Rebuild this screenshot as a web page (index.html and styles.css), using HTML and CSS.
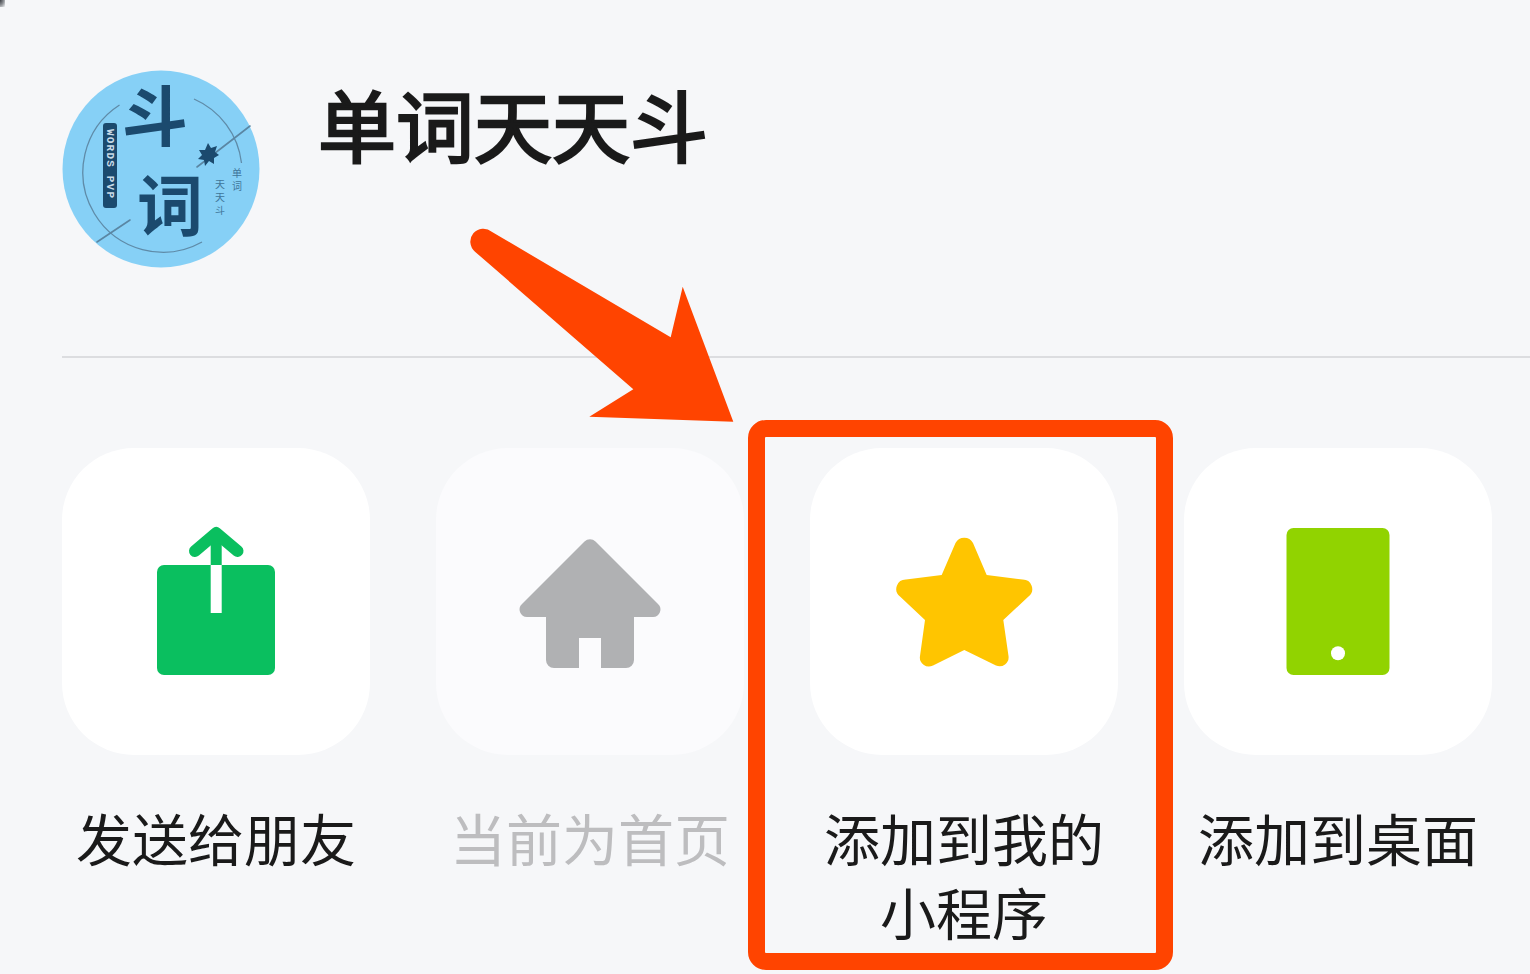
FILE: index.html
```html
<!DOCTYPE html>
<html lang="zh-CN">
<head>
<meta charset="utf-8">
<title>单词天天斗</title>
<link rel="stylesheet" href="styles.css">
</head>
<body>
<main class="sheet">
  <header class="head">
    <svg class="logo" viewBox="0 0 198 198" aria-label="logo">
      <circle cx="99" cy="99" r="98.5" fill="#86d0f6"/>
      <g fill="none" stroke="#5f8ba8" stroke-width="1.3">
        <path d="M57.5 35 A80 80 0 0 0 140 172"/>
        <path d="M132 29 A80 80 0 0 1 179.5 93"/>
      </g>
      <g stroke="#5a86a3" stroke-width="1.6" stroke-linecap="round">
        <path d="M35 172 L68 150"/>
        <path d="M135 97 L188 56"/>
      </g>
      <text class="logo-big" x="93" y="71" text-anchor="middle">斗</text>
      <text class="logo-big" x="108" y="160" text-anchor="middle">词</text>
      <rect x="41" y="53" width="14" height="85" rx="3" fill="#1b4a6e"/>
      <text class="logo-pill" x="48" y="59">WORDS PVP</text>
      <path d="M146 73 L149 78 L155 76 L153 82 L157 85 L152 88 L152 94 L147 91 L143 96 L142 90 L136 89 L140 85 L137 80 L143 80 Z" fill="#1b4a6e"/>
      <text class="logo-small" x="175" y="98">单词</text>
      <text class="logo-small" x="158" y="109">天天斗</text>
    </svg>
    <h1 class="title">单词天天斗</h1>
  </header>
  <hr class="rule">
  <ul class="actions">
    <li class="action">
      <div class="tile">
        <svg class="icon" viewBox="0 0 308 307">
          <rect x="95" y="117" width="118" height="110" rx="7" fill="#0abf5f"/>
          <rect x="148.7" y="90" width="11" height="28" fill="#0abf5f"/>
          <rect x="148.7" y="117" width="11" height="48" fill="#fff"/>
          <path d="M133 103 L154.2 85 L175.5 103" fill="none" stroke="#0abf5f" stroke-width="12" stroke-linecap="round" stroke-linejoin="round"/>
        </svg>
      </div>
      <p class="label">发送给朋友</p>
    </li>
    <li class="action is-disabled">
      <div class="tile">
        <svg class="icon" viewBox="0 0 308 307">
          <path d="M148.5 93.5 a8 8 0 0 1 11 0 L222 156 A7.5 7.5 0 0 1 217 169 H198 V212 a8 8 0 0 1 -8 8 H165 V190 H143 V220 H118 a8 8 0 0 1 -8 -8 V169 H91 A7.5 7.5 0 0 1 86 156 Z" fill="#b0b1b3"/>
        </svg>
      </div>
      <p class="label">当前为首页</p>
    </li>
    <li class="action">
      <div class="tile">
        <svg class="icon" viewBox="0 0 308 307">
          <path d="M131.7 127 L145.5 95 A10 10 0 0 1 163 95 L176.7 127 L212.5 131.5 A9.5 9.5 0 0 1 218.5 148.5 L193.3 172 L198.5 208 A9 9 0 0 1 186 217.5 L154.3 202 L123 217.5 A9 9 0 0 1 110 208 L115 172 L90 148.5 A9.5 9.5 0 0 1 96 131.5 Z" fill="#ffc500"/>
        </svg>
      </div>
      <p class="label">添加到我的<br>小程序</p>
    </li>
    <li class="action">
      <div class="tile">
        <svg class="icon" viewBox="0 0 308 307">
          <rect x="102.5" y="80" width="103" height="147" rx="7" fill="#91d300"/>
          <circle cx="154" cy="205.3" r="7" fill="#fff"/>
        </svg>
      </div>
      <p class="label">添加到桌面</p>
    </li>
  </ul>
</main>
<div class="corner"></div>
<div class="highlight"></div>
<svg class="arrow" viewBox="0 0 1530 974">
  <path d="M491.7 231.7 L670.7 337.3 L682.7 286.7 L733.3 421.7 L589.3 416.7 L633.3 389.3 L475 251.7 A12.5 12.5 0 0 1 491.7 231.7 Z" fill="#ff4400"/>
</svg>
</body>
</html>
```

FILE: styles.css
```css
* {
  box-sizing: border-box;
}

html,
body {
  margin: 0;
  height: 100%;
  overflow: hidden;
}

body {
  background: #f6f7f9;
  color: #1a1a1a;
  font-family: "Noto Sans CJK SC", "Noto Sans", sans-serif;
}

.sheet {
  padding: 70px 0 0 62px;
}

.head {
  display: flex;
  gap: 58px;
  align-items: flex-start;
  height: 198px;
}

.logo {
  width: 198px;
  height: 198px;
  flex: none;
  overflow: visible;
}

.logo-big {
  font-size: 66px;
  font-weight: 700;
  fill: #1b4a6e;
}

.logo-pill {
  font-family: "Liberation Mono", monospace;
  font-size: 11px;
  font-weight: 700;
  fill: #c8dbe8;
  writing-mode: vertical-rl;
  letter-spacing: 1.2px;
}

.logo-small {
  font-size: 10px;
  fill: #3f7599;
  writing-mode: vertical-rl;
  letter-spacing: 3px;
}

.title {
  margin: 3px 0 0;
  font-size: 78px;
  line-height: 100px;
  font-weight: 400;
  -webkit-text-stroke: 2.6px #1a1a1a;
  white-space: nowrap;
}

.rule {
  margin: 88px 0 0;
  border: 0;
  height: 2px;
  background: #dcdde0;
}

.actions {
  display: grid;
  grid-template-columns: repeat(4, 308px);
  column-gap: 66px;
  margin: 90px 0 0;
  padding: 0;
  list-style: none;
}

.tile {
  height: 307px;
  border-radius: 72px;
  background: #fff;
}

.icon {
  display: block;
  width: 308px;
  height: 307px;
}

.label {
  margin: 45px -30px 0;
  font-size: 56px;
  line-height: 74px;
  text-align: center;
}

.is-disabled .tile {
  background: #fbfbfd;
}

.is-disabled .label {
  color: #bdbdbf;
}

.corner {
  position: absolute;
  left: 0;
  top: 0;
  width: 5px;
  height: 7px;
  background: radial-gradient(ellipse at 0 0, #3c3f44 0, #8a8d92 50%, #f6f7f9 100%);
}

.highlight {
  position: absolute;
  left: 748px;
  top: 420px;
  width: 425px;
  height: 550px;
  border: 17.5px solid #ff4400;
  border-radius: 18px;
}

.arrow {
  position: absolute;
  inset: 0;
  width: 1530px;
  height: 974px;
  pointer-events: none;
}
```
